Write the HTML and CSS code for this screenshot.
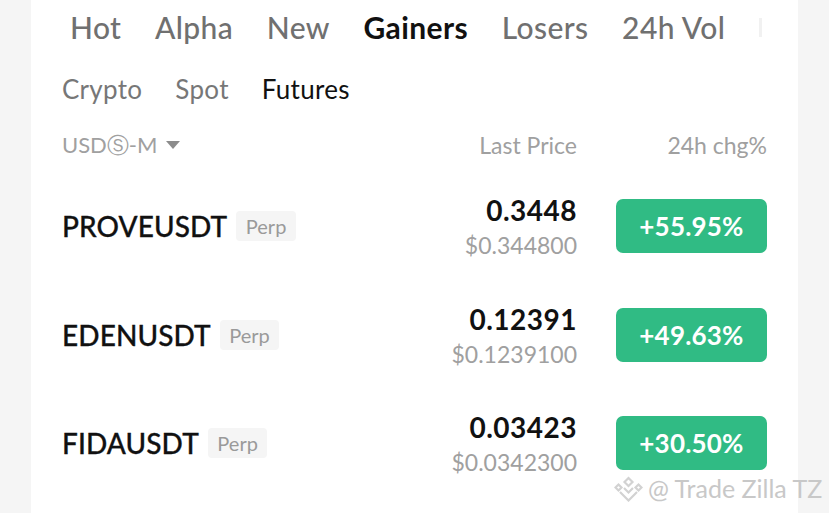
FILE: index.html
```html
<!DOCTYPE html>
<html lang="en">
<head>
<meta charset="utf-8">
<title>Markets</title>
<link rel="stylesheet" href="styles.css">
</head>
<body>
<main class="card">
  <nav class="tabs">
    <span class="tab">Hot</span>
    <span class="tab">Alpha</span>
    <span class="tab">New</span>
    <span class="tab active">Gainers</span>
    <span class="tab">Losers</span>
    <span class="tab">24h Vol</span>
    <span class="tab-cut"></span>
  </nav>
  <nav class="subtabs">
    <span class="subtab">Crypto</span>
    <span class="subtab">Spot</span>
    <span class="subtab active">Futures</span>
  </nav>
  <div class="head">
    <span class="head-market"><span class="head-label">USDⓈ-M</span><i class="caret"></i></span>
    <span class="head-price">Last Price</span>
    <span class="head-chg">24h chg%</span>
  </div>
  <section class="row">
    <div class="name"><span class="symbol">PROVEUSDT</span><span class="tag">Perp</span></div>
    <div class="price"><span class="last">0.3448</span><span class="fiat">$0.344800</span></div>
    <div class="pill">+55.95%</div>
  </section>
  <section class="row">
    <div class="name"><span class="symbol">EDENUSDT</span><span class="tag">Perp</span></div>
    <div class="price"><span class="last">0.12391</span><span class="fiat">$0.1239100</span></div>
    <div class="pill">+49.63%</div>
  </section>
  <section class="row">
    <div class="name"><span class="symbol">FIDAUSDT</span><span class="tag">Perp</span></div>
    <div class="price"><span class="last">0.03423</span><span class="fiat">$0.0342300</span></div>
    <div class="pill">+30.50%</div>
  </section>
</main>
<div class="watermark">
  <svg class="wm-icon" width="29" height="27" viewBox="0 0 29 27" fill="none" stroke="#d2d2d2" stroke-width="2.2">
    <path d="M14.5 3l4 4-4 4-4-4z"/>
    <path d="M1.5 12.5l3-3 3 3-3 3z"/>
    <path d="M27.5 12.5l-3-3-3 3 3 3z"/>
    <path d="M6 17l8.5 8.5L23 17"/>
    <path d="M10 13l4.5 4.5L19 13"/>
  </svg>
  <span>@ Trade Zilla TZ</span>
</div>
</body>
</html>
```
FILE: styles.css
```css
* { box-sizing: border-box; }
html, body { margin: 0; height: 100%; }
body {
  position: relative;
  width: 829px;
  height: 513px;
  overflow: hidden;
  background: #f5f5f5;
  font-family: "Lato", "Liberation Sans", sans-serif;
}
.card {
  width: 767px;
  height: 513px;
  margin-left: 31px;
  padding: 0 31px;
  background: #fff;
  overflow: hidden;
}
.tabs {
  display: flex;
  align-items: center;
  gap: 33.6px;
  height: 54px;
  padding-left: 8px;
  font-size: 30px;
  font-weight: 500;
  letter-spacing: 0.4px;
  line-height: 36px;
  color: #707070;
}
.tab.active { color: #111; font-weight: 700; }
.tab-cut { width: 3px; height: 19px; background: #f1f1f1; }
.subtabs {
  display: flex;
  align-items: center;
  gap: 33px;
  height: 44px;
  margin-top: 13px;
  font-size: 26px;
  letter-spacing: 0.3px;
  color: #777;
}
.subtab.active { color: #111; }
.head {
  display: grid;
  grid-template-columns: 1fr 140px 190px;
  align-items: center;
  height: 26px;
  margin-top: 21px;
  font-size: 23px;
  line-height: 26px;
  color: #a0a0a0;
}
.head-market { display: flex; align-items: center; gap: 9px; height: 26px; }
.head-label { font-size: 22px; line-height: 26px; }
.caret {
  width: 0;
  height: 0;
  border-left: 7px solid transparent;
  border-right: 7px solid transparent;
  border-top: 8px solid #8c8c8c;
}
.head-price, .head-chg { text-align: right; }
.row {
  display: grid;
  grid-template-columns: 1fr 190px 190px;
  align-items: center;
  height: 108.5px;
}
.row:first-of-type { margin-top: 14px; }
.name { display: flex; align-items: center; gap: 9px; }
.symbol {
  font-size: 28px;
  font-weight: 500;
  letter-spacing: 0.1px;
  color: #111;
  -webkit-text-stroke: 0.3px #111;
}
.tag {
  height: 30px;
  padding: 0 9.5px;
  border-radius: 4px;
  background: #f5f5f5;
  color: #9a9a9a;
  font-size: 20px;
  line-height: 30px;
}
.price { display: flex; flex-direction: column; align-items: flex-end; gap: 6px; }
.last { font-size: 28px; font-weight: 700; letter-spacing: 0.5px; color: #111; line-height: 32px; }
.fiat { font-size: 23px; color: #a0a0a0; line-height: 26px; }
.pill {
  justify-self: end;
  width: 151px;
  height: 54px;
  border-radius: 7px;
  background: #30bb84;
  color: #fff;
  font-size: 26px;
  font-weight: 700;
  letter-spacing: 0.2px;
  line-height: 54px;
  text-align: center;
}
.watermark {
  position: absolute;
  left: 614px;
  top: 473px;
  display: flex;
  align-items: center;
  gap: 5px;
  color: #c8c8c8;
  font-size: 25px;
  line-height: 30px;
  white-space: nowrap;
}
```
